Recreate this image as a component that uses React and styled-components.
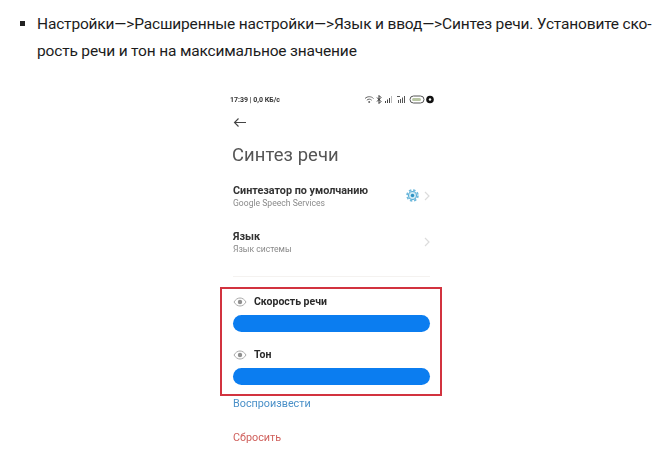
import React from "react";
import styled, { createGlobalStyle } from "styled-components";

const Global = createGlobalStyle`
  html, body { margin: 0; padding: 0; background: #fff; }
  body { width: 658px; height: 460px; overflow: hidden; font-family: Roboto, "Liberation Sans", sans-serif; }
`;
const Page = styled.div`
  height: 460px;
  display: flex;
  flex-direction: column;
  align-items: center;
  overflow: hidden;
`;
const List = styled.ul`
  align-self: stretch;
  list-style: none;
  margin: 0;
  padding: 11px 0 0 37px;
`;
const Item = styled.li`
  position: relative;
  font-family: Roboto, sans-serif;
  font-size: 15.5px;
  line-height: 27px;
  color: #1c1c1c;
  letter-spacing: -0.17px;
  white-space: nowrap;
  &::before {
    content: "";
    position: absolute;
    left: -17px;
    top: 10px;
    width: 5px;
    height: 5px;
    background: #222;
  }
`;
const Phone = styled.div`
  width: 222px;
  margin-top: 28px;
  margin-left: 12px;
  display: flex;
  flex-direction: column;
  filter: blur(0.5px);
`;
const Status = styled.div`
  display: flex;
  align-items: center;
  justify-content: space-between;
  padding: 0 10px 0 6px;
  height: 13px;
  font-size: 7px;
  font-weight: 700;
  color: #333;
`;
const Glyphs = styled.svg`
  width: 72px;
  height: 9px;
  display: block;
`;
const Back = styled.svg`
  width: 14px;
  height: 11px;
  margin: 11px 0 0 9px;
  display: block;
`;
const Title = styled.div`
  font-size: 18.4px;
  line-height: 26px;
  margin: 14px 0 0 8px;
  color: #555;
  letter-spacing: 0.1px;
`;
const Row = styled.div`
  display: flex;
  align-items: center;
  height: 29px;
  padding: 0 16px 0 9px;
  margin-top: ${(p) => p.$gap}px;
`;
const RowText = styled.div`
  flex: 1;
  min-width: 0;
`;
const RowTitle = styled.div`
  font-size: 10.8px;
  line-height: 15px;
  font-weight: 700;
  color: #333;
`;
const RowSub = styled.div`
  font-size: 8.6px;
  line-height: 11px;
  color: #8a8a8a;
`;
const Chevron = styled.svg`
  width: 6px;
  height: 10px;
  display: block;
`;
const Gear = styled.svg`
  width: 13px;
  height: 13px;
  display: block;
  margin-right: 5px;
`;
const Divider = styled.div`
  height: 1px;
  margin: 20px 16px 0 9px;
  background: #f4f2f0;
`;
const Highlight = styled.section`
  box-sizing: border-box;
  width: 222px;
  height: 109px;
  margin-top: 10px;
  margin-left: -4px;
  border: 2px solid #d2333f;
  padding: 5px 10px 0 11px;
  display: flex;
  flex-direction: column;
`;
const SliderLabel = styled.div`
  display: flex;
  align-items: center;
  gap: 7px;
  height: 15px;
  font-size: 10.5px;
  font-weight: 700;
  color: #2a2a2a;
  margin-top: ${(p) => p.$gap}px;
`;
const Eye = styled.svg`
  width: 14px;
  height: 10px;
  display: block;
`;
const Bar = styled.div`
  height: 17px;
  border-radius: 9px;
  background: #0b7df0;
  margin-top: 6px;
`;
const Action = styled.div`
  font-size: 10.8px;
  line-height: 14px;
  color: ${(p) => p.$color};
  margin: ${(p) => p.$gap}px 0 0 9px;
`;

const EyeIcon = () => (
  <Eye viewBox="0 0 14 10">
    <path d="M1 5c1.6-2.6 3.6-4 6-4s4.400 1.400 6 4c-1.600 2.600-3.600 4-6 4S2.600 7.600 1 5z" fill="none" stroke="#a8a8a8" strokeWidth="1" />
    <circle cx="7" cy="5" r="2.200" fill="#8f8f8f" />
  </Eye>
);
const ChevronIcon = () => (
  <Chevron viewBox="0 0 6 10">
    <path d="M1 1l4 4-4 4" fill="none" stroke="#dcdcdc" strokeWidth="1.200" />
  </Chevron>
);

export default function App() {
  return (
    <Page>
      <Global />
      <List>
        <Item>
          Настройки—&gt;Расширенные настройки—&gt;Язык и ввод—&gt;Синтез речи. Установите ско-
          <br />
          рость речи и тон на максимальное значение
        </Item>
      </List>
      <Phone>
        <Status>
          <span>17:39 | 0,0 КБ/с</span>
          <Glyphs viewBox="0 0 72 9">
            <path d="M1 3.500c2.500-2.400 6-2.400 8.500 0M2.800 5.200c1.500-1.400 3.400-1.400 4.900 0" fill="none" stroke="#666" strokeWidth="1" />
            <circle cx="5.200" cy="7" r="1" fill="#666" />
            <path d="M13 2.500l4 4-2 2v-8l2 2-4 4" fill="none" stroke="#333" strokeWidth="1" />
            <path d="M21 6h1v2h-1zM23 4.500h1V8h-1zM25 3h1v5h-1z" fill="#444" />
            <path d="M27 1h1v7h-1z" fill="#bbb" />
            <path d="M33 1h3v1h-3zM34 5h1v3h-1zM36 4h1v4h-1zM38 2.500h1V8h-1zM40 1h1v7h-1z" fill="#555" />
            <rect x="46" y="1" width="14" height="7" rx="3.500" fill="none" stroke="#555" strokeWidth="1" />
            <rect x="48" y="3" width="9" height="3" rx="1.500" fill="#b9c6a4" />
            <circle cx="66" cy="4.500" r="3.800" fill="#111" />
            <circle cx="66" cy="4.500" r="1.200" fill="#fff" />
          </Glyphs>
        </Status>
        <Back viewBox="0 0 14 11">
          <path d="M13 5.500H1.500M5.500 1.500l-4 4 4 4" fill="none" stroke="#444" strokeWidth="1.100" />
        </Back>
        <Title>Синтез речи</Title>
        <Row $gap={13}>
          <RowText>
            <RowTitle>Синтезатор по умолчанию</RowTitle>
            <RowSub>Google Speech Services</RowSub>
          </RowText>
          <Gear viewBox="0 0 12 12">
            <circle cx="6" cy="6" r="5" fill="none" stroke="#6fb9dc" strokeWidth="1.600" strokeDasharray="2.200 1.730" />
            <circle cx="6" cy="6" r="3.700" fill="#cfe9f4" stroke="#5aaed6" strokeWidth="1" />
            <circle cx="6" cy="6" r="1.600" fill="#2f93c4" />
          </Gear>
          <ChevronIcon />
        </Row>
        <Row $gap={17}>
          <RowText>
            <RowTitle>Язык</RowTitle>
            <RowSub>Язык системы</RowSub>
          </RowText>
          <ChevronIcon />
        </Row>
        <Divider />
        <Highlight>
          <SliderLabel $gap={0}>
            <EyeIcon />
            Скорость речи
          </SliderLabel>
          <Bar />
          <SliderLabel $gap={15}>
            <EyeIcon />
            Тон
          </SliderLabel>
          <Bar />
        </Highlight>
        <Action $color="#4a90c8" $gap={1}>Воспроизвести</Action>
        <Action $color="#d0605c" $gap={20}>Сбросить</Action>
      </Phone>
    </Page>
  );
}
